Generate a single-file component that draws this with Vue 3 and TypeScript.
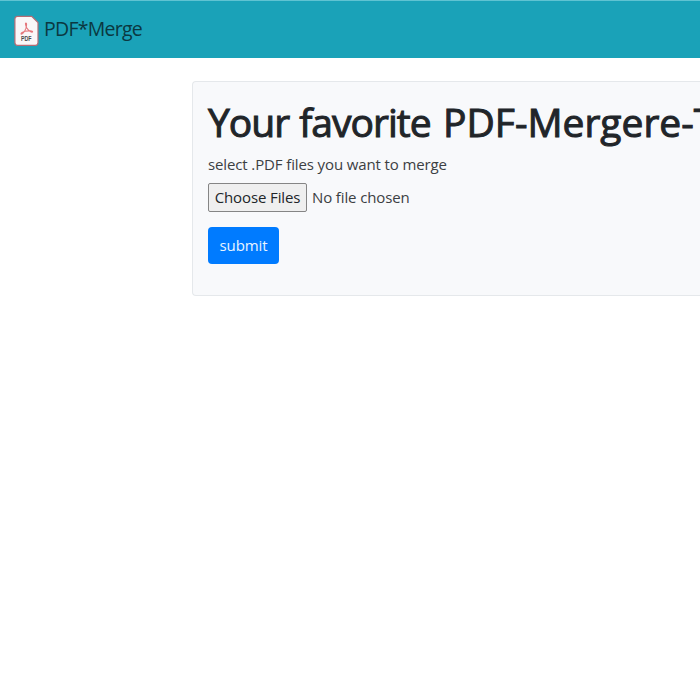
<script setup lang="ts">
import { ref } from 'vue'

const picker = ref<HTMLInputElement | null>(null)
const status = ref<string>('No file chosen')

function onPick(event: Event): void {
  const files = (event.target as HTMLInputElement).files
  const count = files ? files.length : 0
  status.value = count === 0 ? 'No file chosen' : count === 1 ? files![0].name : `${count} files`
}
</script>

<template>
  <div class="page">
    <nav class="navbar">
      <svg class="logo" viewBox="0 0 26 32" aria-hidden="true">
        <path d="M4 1.4H18.2L24.5 7.6V27.6Q24.5 30.4 21.8 30.4H4Q1.4 30.4 1.4 27.6V4Q1.4 1.4 4 1.4Z" fill="#faf7f8" stroke="#b56c74" stroke-width="1.2" />
        <path d="M12.4 8C13.4 8 13.2 11 12.4 13.4C11.2 16.4 9.4 19.2 7.8 19.2C6.8 18.4 8.8 17 11.6 16.3C15 15.5 19.2 15.8 19.1 17C18.3 17.9 14.8 15.8 13.2 12.8C12 10.4 11.6 8 12.4 8Z" fill="none" stroke="#e5767b" stroke-width="1.1" />
        <text x="12.8" y="26.4" text-anchor="middle" textLength="10.6" lengthAdjust="spacingAndGlyphs" class="logo-text">PDF</text>
      </svg>
      <span class="brand">PDF*Merge</span>
    </nav>
    <main class="card">
      <h1 class="title"><span class="lead">Your favorite</span> <span class="name">PDF-Mergere-T</span></h1>
      <p class="hint">select .PDF files you want to merge</p>
      <div class="file">
        <input ref="picker" type="file" accept=".pdf" multiple hidden @change="onPick" />
        <button type="button" class="choose" @click="picker?.click()">Choose Files</button>
        <span class="status">{{ status }}</span>
      </div>
      <button type="button" class="submit">submit</button>
    </main>
  </div>
</template>

<style>
body {
  margin: 0;
  background: #fff;
}
</style>

<style scoped>
.page {
  height: 700px;
  overflow: hidden;
  font-family: "Open Sans", "Noto Sans", sans-serif;
  font-size: 15px;
  color: #212529;
}
.navbar {
  box-sizing: border-box;
  height: 58px;
  padding: 0 14px 0 13px;
  display: flex;
  align-items: center;
  background: #1aa2b8;
  border-top: 1px solid #5fc3d2;
}
.logo {
  width: 27px;
  height: 32px;
  margin-top: 3px;
}
.logo-text {
  font: 700 6.6px "Liberation Sans", sans-serif;
  fill: #4b4b4f;
}
.brand {
  margin: -2px 0 0 4px;
  font-size: 19.5px;
  line-height: 30px;
  letter-spacing: -0.75px;
  color: #0b3841;
}
.card {
  box-sizing: border-box;
  height: 215px;
  margin: 23px 0 0 192px;
  padding: 16px 0 0 15px;
  background: #f8f9fb;
  border: 1px solid #e5e8eb;
  border-right: 0;
  border-radius: 4px 0 0 4px;
}
.title {
  display: flex;
  margin: 0;
  font-size: 39px;
  line-height: 48px;
  font-weight: 400;
  white-space: nowrap;
  -webkit-text-stroke: 1px #212529;
}
.lead {
  flex: none;
  width: 235px;
  letter-spacing: -1px;
  word-spacing: 1px;
}
.name {
  flex: none;
  letter-spacing: 0;
}
.hint {
  margin: 6px 0 0;
  line-height: 24px;
  letter-spacing: -0.12px;
  color: #3c4043;
}
.file {
  display: flex;
  align-items: center;
  height: 29px;
  margin-top: 7px;
}
.choose {
  box-sizing: border-box;
  width: 99px;
  height: 29px;
  padding: 0 0 1px;
  font: inherit;
  letter-spacing: -0.12px;
  color: #212529;
  white-space: nowrap;
  background: #efefef;
  border: 1px solid #858585;
  border-radius: 2px;
}
.status {
  margin: -1px 0 0 5px;
  letter-spacing: -0.12px;
  color: #3c4043;
}
.submit {
  display: block;
  width: 71px;
  height: 37px;
  margin-top: 15px;
  padding: 0 0 1px;
  font: inherit;
  letter-spacing: -0.12px;
  color: #e9f4ff;
  background: #007bff;
  border: 0;
  border-radius: 4px;
}
</style>
